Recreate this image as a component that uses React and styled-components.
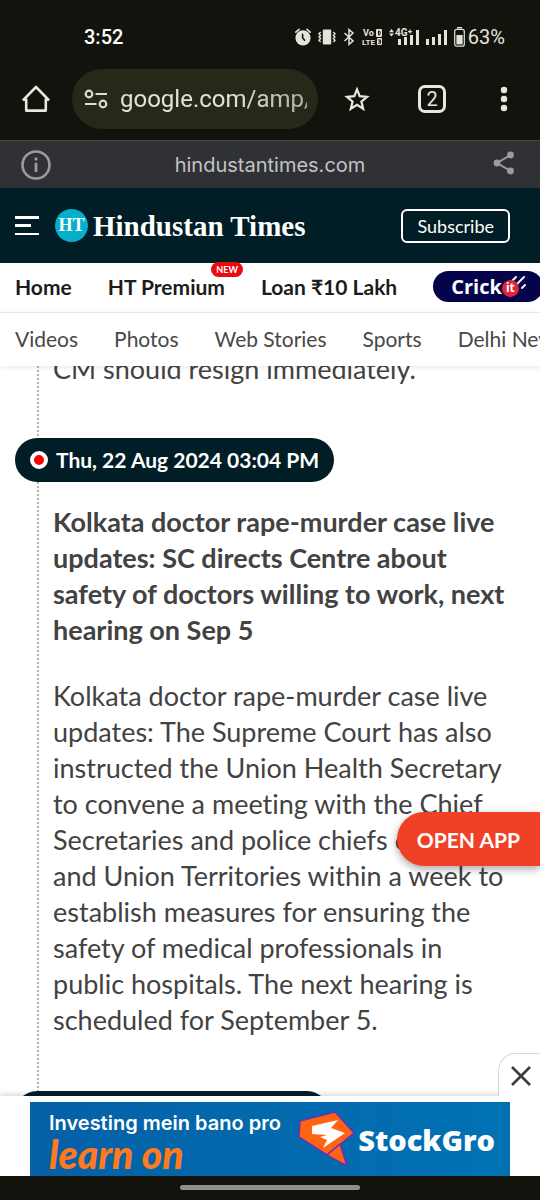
import React from 'react';
import styled, { createGlobalStyle } from 'styled-components';

const topLinks = [
  { label: 'Home' },
  { label: 'HT Premium', badge: 'NEW' },
  { label: 'Loan ₹10 Lakh' },
];

const sections = ['Videos', 'Photos', 'Web Stories', 'Sports', 'Delhi News'];

const AlarmIcon = () => (
  <svg width="18" height="18" viewBox="0 0 18 18" fill="#e4e3da">
    <path
      d="M1.8 4.2 5 1.4M16.2 4.2 13 1.4"
      stroke="#e4e3da"
      strokeWidth="1.6"
      strokeLinecap="round"
    />
    <circle cx="9" cy="9.8" r="7.6" />
    <path
      d="M8.6 6.4v3.4l2 2.4"
      fill="none"
      stroke="#12130c"
      strokeWidth="1.6"
      strokeLinecap="round"
    />
  </svg>
);

const VibrateIcon = () => (
  <svg width="18" height="18" viewBox="0 0 18 18" fill="none">
    <rect x="4.8" y="1.4" width="8.4" height="15.2" rx="1" fill="#e4e3da" />
    <path
      d="M2.6 4 1 5.700 2.600 7.400 1 9l1.600 1.600L1 12.300 2.600 14M15.400 4 17 5.700l-1.600 1.700L17 9l-1.600 1.600 1.600 1.700-1.600 1.700"
      stroke="#e4e3da"
      strokeWidth="1.4"
    />
  </svg>
);

const BluetoothIcon = () => (
  <svg width="14" height="18" viewBox="0 0 14 18" fill="none">
    <path
      d="M2.5 5 11 13 7 16.4V1.6L11 5 2.5 13"
      stroke="#e4e3da"
      strokeWidth="1.5"
    />
  </svg>
);

const VolteIcon = () => (
  <svg width="20" height="18" viewBox="0 0 20 18" fill="#e4e3da">
    <g fontFamily="Roboto, sans-serif" fontSize="9" fontWeight="700">
      <text x="1" y="8">
        Vo
      </text>
      <text x="0" y="17" fontSize="8">
        LTE
      </text>
    </g>
    <rect x="14" y="1" width="6" height="8" rx="1" />
    <rect x="15" y="10" width="5" height="7" rx="1" />
    <path
      d="M16.5 3v4h.6a1 1 0 0 0 1-1V4a1 1 0 0 0-1-1zM16 12h2.6v1.6H16.8M18.6 13.6v1.6H16"
      fill="none"
      stroke="#12130c"
    />
  </svg>
);

const NetworkIcon = () => (
  <svg width="32" height="18" viewBox="0 0 32 18" fill="#e4e3da">
    <path d="M1 4.2 3.5 1 6 4.2zM1 5.6 3.5 8.4 6 5.6z" />
    <text
      x="7"
      y="8"
      fontFamily="Roboto, sans-serif"
      fontSize="10"
      fontWeight="700"
    >
      4G
    </text>
    <path d="M20 3h1.4V1.6h1.2V3H24v1.2h-1.4v1.4h-1.2V4.2H20z" />
    <path d="M10 11h3v6h-3zM16 9h3v8h-3zM22 7h3v10h-3zM28 2h3v15h-3z" />
  </svg>
);

const SignalIcon = () => (
  <svg width="22" height="18" viewBox="0 0 22 18" fill="#e4e3da">
    <path d="M0 11h3v6H0zM6 9h3v8H6zM12 6h3v11h-3zM18 2h3v15h-3z" />
  </svg>
);

const BatteryIcon = () => (
  <svg width="11" height="20" viewBox="0 0 11 20" fill="#e4e3da">
    <path d="M3 0h5v1.4H3z" />
    <rect
      x=".7"
      y="2.4"
      width="9.6"
      height="16.8"
      rx="2"
      fill="none"
      stroke="#e4e3da"
      strokeWidth="1.2"
    />
    <path d="M2.4 8h6.2v9.4H2.4z" />
  </svg>
);

const HomeIcon = () => (
  <svg width="28" height="28" viewBox="0 0 28 28" fill="none">
    <path
      d="M1.6 14.6h2.6v11h19.6v-11h2.6L14 2z"
      stroke="#e9e8dc"
      strokeWidth="2.6"
      strokeLinejoin="round"
    />
  </svg>
);

const TuneIcon = () => (
  <svg width="24" height="20" viewBox="0 0 24 20" fill="none">
    <g stroke="#dedccb" strokeWidth="2.2">
      <circle cx="5" cy="5" r="3.3" />
      <circle cx="19" cy="15" r="3.3" />
      <path d="M11.5 5H23M1 15h11.5" />
    </g>
  </svg>
);

const StarIcon = () => (
  <svg width="26" height="26" viewBox="0 0 26 26" fill="none">
    <path
      d="m13 3.400 2.700 6.800 7.300.6-5.600 4.800 1.800 7.200-6.200-3.900-6.200 3.900 1.800-7.200L3 10.800l7.300-.6z"
      stroke="#e9e8dc"
      strokeWidth="2.2"
    />
  </svg>
);

const MoreIcon = () => (
  <svg width="20" height="26" viewBox="0 0 20 26" fill="#e9e8dc">
    <circle cx="10" cy="4" r="3.2" />
    <circle cx="10" cy="13" r="3.2" />
    <circle cx="10" cy="22" r="3.2" />
  </svg>
);

const InfoIcon = () => (
  <svg width="30" height="30" viewBox="0 0 30 30" fill="none">
    <circle cx="15" cy="15" r="13.5" stroke="#9c9c9c" strokeWidth="2.6" />
    <path d="M15 12.8V22M15 7.5v3" stroke="#9c9c9c" strokeWidth="2.8" />
  </svg>
);

const ShareIcon = () => (
  <svg width="30" height="28" viewBox="0 0 30 28" fill="#9c9c9c">
    <path
      d="M21.5 4 8 12l13.500 8"
      fill="none"
      stroke="#9c9c9c"
      strokeWidth="2"
    />
    <circle cx="21.5" cy="4" r="3.4" />
    <circle cx="8" cy="12" r="3.4" />
    <circle cx="21.5" cy="20" r="3.4" />
  </svg>
);

const MenuIcon = () => (
  <svg width="24" height="20" viewBox="0 0 24 20" fill="#fff">
    <path d="M0 0h24v3H0zM0 8h16v3H0zM0 17h24v2H0z" />
  </svg>
);

const BallTrail = () => (
  <svg width="16" height="13" viewBox="0 0 16 13" fill="none">
    <path
      d="M1 6l5-5M7 8l7-7M12 12l3-3"
      stroke="#fff"
      strokeWidth="1.8"
      strokeLinecap="round"
    />
  </svg>
);

const StockGroMark = () => (
  <svg width="58" height="58" viewBox="0 0 58 58">
    <g fill="#ff6413" stroke="#6a2fb5" strokeWidth="1.5">
      <path d="M3 11 38 2l19 21-27 22L2 27z" />
      <path d="m30 45 13-11 7 22z" />
    </g>
    <path
      d="M15 16 41 10l-7 8 14 5-22 15 4-8-7-3 7-2-15-1z"
      fill="#fff"
    />
  </svg>
);

const CloseIcon = () => (
  <svg width="20" height="20" viewBox="0 0 20 20" fill="none">
    <path d="m1 1 18 18M19 1 1 19" stroke="#3c3c3c" strokeWidth="2.6" />
  </svg>
);

const App = () => {
  return (
    <Screen>
      <GlobalStyle />
      <StatusBar>
        <Clock>3:52</Clock>
        <StatusIcons>
          <AlarmIcon />
          <VibrateIcon />
          <BluetoothIcon />
          <VolteIcon />
          <NetworkIcon />
          <SignalIcon />
          <Battery>
            <BatteryIcon />
            63%
          </Battery>
        </StatusIcons>
      </StatusBar>

      <Toolbar>
        <IconButton aria-label="Home page">
          <HomeIcon />
        </IconButton>
        <AddressBar>
          <TuneIcon />
          <AddressInput
            type="text"
            aria-label="Address"
            defaultValue="google.com/amp/"
          />
        </AddressBar>
        <ToolbarActions>
          <IconButton aria-label="Bookmark">
            <StarIcon />
          </IconButton>
          <TabsButton>2</TabsButton>
          <IconButton aria-label="More">
            <MoreIcon />
          </IconButton>
        </ToolbarActions>
      </Toolbar>

      <AmpBar>
        <IconButton aria-label="Page info">
          <InfoIcon />
        </IconButton>
        <a href="#source">hindustantimes.com</a>
        <IconButton aria-label="Share">
          <ShareIcon />
        </IconButton>
      </AmpBar>

      <Header>
        <IconButton aria-label="Menu">
          <MenuIcon />
        </IconButton>
        <Brand href="#home">
          <BrandMark>HT</BrandMark>
          <BrandName>Hindustan Times</BrandName>
        </Brand>
        <SubscribeButton>Subscribe</SubscribeButton>
      </Header>

      <TopNav>
        {topLinks.map(({ label, badge }) => (
          <TopLink key={label} href="#top">
            {label}
            {badge && <NewBadge>{badge}</NewBadge>}
          </TopLink>
        ))}
        <CrickitLink href="#crickit">
          Crick
          <Trail>
            <BallTrail />
          </Trail>
          <Ball>it</Ball>
        </CrickitLink>
      </TopNav>

      <SectionNav>
        {sections.map(name => (
          <a key={name} href="#section">
            {name}
          </a>
        ))}
      </SectionNav>

      <Main>
        <Timeline>
          <LastLine>CM should resign immediately.</LastLine>
          <Timestamp>
            <LiveDot />
            Thu, 22 Aug 2024 03:04 PM
          </Timestamp>
          <Headline>
            Kolkata doctor rape-murder case live updates: SC directs Centre
            about safety of doctors willing to work, next hearing on Sep 5
          </Headline>
          <Paragraph>
            Kolkata doctor rape-murder case live updates: The Supreme Court has
            also instructed the Union Health Secretary to convene a meeting
            with the Chief Secretaries and police chiefs of states and Union
            Territories within a week to establish measures for ensuring the
            safety of medical professionals in public hospitals. The next
            hearing is scheduled for September 5.
          </Paragraph>
          <NextTimestamp />
        </Timeline>
      </Main>

      <OpenAppButton>OPEN APP</OpenAppButton>

      <AdSlot>
        <CloseButton aria-label="Close ad">
          <CloseIcon />
        </CloseButton>
        <Banner href="#ad">
          <AdCopy>
            <AdLead>Investing mein bano pro</AdLead>
            <AdAccent>learn on</AdAccent>
          </AdCopy>
          <AdBrand>
            <StockGroMark />
            StockGro
          </AdBrand>
        </Banner>
      </AdSlot>

      <GestureBar>
        <GestureHandle />
      </GestureBar>
    </Screen>
  );
};

const GlobalStyle = createGlobalStyle`
  * {
    box-sizing: border-box;
  }

  body {
    margin: 0;
    background: #fff;
    font-family: Lato, 'Liberation Sans', sans-serif;
    font-variant-ligatures: none;
    color: #424242;
  }

  button {
    padding: 0;
    border: 0;
    background: none;
    font-family: inherit;
    color: inherit;
    cursor: pointer;
  }

  a {
    color: inherit;
    text-decoration: none;
  }

  svg {
    display: block;
    flex: none;
  }
`;

const Screen = styled.div`
  position: relative;
  display: flex;
  flex-direction: column;
  height: 100vh;
  overflow: hidden;
`;

const StatusBar = styled.div`
  display: flex;
  flex: none;
  align-items: center;
  justify-content: space-between;
  padding: 22px 35px 6px 84px;
  background: #12130c;
  color: #e4e3da;
  font-family: Roboto, sans-serif;
  font-size: 20px;
  line-height: 30px;
`;

const Clock = styled.span`
  color: #fff;
  font-weight: 500;
`;

const StatusIcons = styled.div`
  display: flex;
  align-items: center;
  gap: 6px;
`;

const Battery = styled.span`
  display: flex;
  align-items: center;
  gap: 3px;
`;

const Toolbar = styled.div`
  display: flex;
  flex: none;
  align-items: center;
  padding: 11px 26px 11px 22px;
  background: #12130c;
  border-bottom: 1px solid #45473a;
`;

const IconButton = styled.button`
  display: flex;
  flex: none;
`;

const AddressBar = styled.label`
  display: flex;
  flex: 1;
  align-items: center;
  gap: 12px;
  min-width: 0;
  height: 60px;
  margin-left: 22px;
  padding: 0 11px 0 12px;
  border-radius: 30px;
  background: #26281a;
`;

const AddressInput = styled.input`
  flex: 1;
  min-width: 0;
  padding: 0;
  border: 0;
  outline: 0;
  background: none;
  color: #e4e2d2;
  font-family: Roboto, sans-serif;
  font-size: 24px;
  line-height: 32px;
  mask-image: linear-gradient(to right, #000 60%, rgba(0, 0, 0, 0.7));
`;

const ToolbarActions = styled.div`
  display: flex;
  align-items: center;
  gap: 48px;
  margin-left: 26px;
`;

const TabsButton = styled.button`
  width: 28px;
  height: 28px;
  border: 3px solid #e9e8dc;
  border-radius: 7px;
  color: #e9e8dc;
  font-family: Roboto, sans-serif;
  font-size: 20px;
  line-height: 22px;
`;

const AmpBar = styled.div`
  display: flex;
  flex: none;
  align-items: center;
  justify-content: space-between;
  height: 47px;
  padding: 0 21px;
  background: #303135;
  color: #c3c3c5;
  font-family: Inter, sans-serif;
  font-size: 20px;
`;

const Header = styled.header`
  display: flex;
  flex: none;
  align-items: center;
  height: 75px;
  padding: 0 30px 0 15px;
  background: #011e27;
  color: #fff;
`;

const Brand = styled.a`
  display: flex;
  align-items: center;
  gap: 5px;
  margin: 0 auto 0 16px;
  font-family: 'Liberation Serif', serif;
  font-weight: 700;
  white-space: nowrap;
`;

const BrandMark = styled.span`
  width: 33px;
  height: 33px;
  border-radius: 50%;
  background: #05afc9;
  font-size: 18px;
  line-height: 33px;
  text-align: center;
`;

const BrandName = styled.span`
  font-size: 29px;
  line-height: 36px;
`;

const SubscribeButton = styled.button`
  height: 34px;
  padding: 0 14px;
  border: 2px solid #fff;
  border-radius: 6px;
  font-size: 18px;
`;

const TopNav = styled.nav`
  display: flex;
  flex: none;
  align-items: center;
  gap: 36px;
  height: 50px;
  padding: 0 0 2px 15px;
  border-bottom: 1px solid #ececec;
  color: #1c1c1c;
  font-size: 21px;
  font-weight: 700;
  white-space: nowrap;
`;

const TopLink = styled.a`
  position: relative;
`;

const NewBadge = styled.span`
  position: absolute;
  top: -12px;
  right: -18px;
  padding: 0 5px;
  border-radius: 8px;
  background: #e80c10;
  color: #fff;
  font-size: 9px;
  line-height: 15px;
`;

const CrickitLink = styled.a`
  position: relative;
  display: flex;
  flex: none;
  align-items: center;
  height: 31px;
  padding: 0 24px 0 18px;
  border-radius: 16px;
  background: #05044b;
  color: #fff;
  font-family: 'Open Sans', sans-serif;
  font-size: 20px;
`;

const Ball = styled.span`
  position: relative;
  width: 17px;
  height: 17px;
  margin-top: 4px;
  border-radius: 50%;
  background: #e0243a;
  font-size: 12px;
  line-height: 16px;
  text-align: center;
`;

const Trail = styled.span`
  position: absolute;
  top: 5px;
  right: 17px;
`;

const SectionNav = styled.nav`
  position: relative;
  z-index: 1;
  display: flex;
  flex: none;
  align-items: center;
  gap: 36px;
  height: 53px;
  padding: 0 0 2px 15px;
  background: #fff;
  box-shadow: 0 1px 6px rgba(0, 0, 0, 0.1);
  color: #484848;
  font-size: 21px;
  white-space: nowrap;
`;

const Main = styled.main`
  flex: 1;
  min-height: 0;
  overflow: hidden;
`;

const Timeline = styled.section`
  margin: -15px 30px 0 37px;
  padding-left: 14px;
  border-left: 2px dotted #b4b4b4;
  font-size: 27px;
  line-height: 36px;
`;

const LastLine = styled.p`
  margin: 0 0 51px;
`;

const Headline = styled.h2`
  margin: 22px 0 0;
  font-size: 27px;
  font-weight: 700;
  line-height: 36px;
`;

const Paragraph = styled.p`
  margin: 30px 0 53px;
`;

const Timestamp = styled.div`
  display: flex;
  align-items: center;
  gap: 8px;
  width: fit-content;
  margin-left: -38px;
  padding: 0 15px;
  border-radius: 22px;
  background: #011e27;
  color: #fff;
  font-size: 21px;
  font-weight: 700;
  line-height: 44px;
  white-space: nowrap;
`;

const NextTimestamp = styled(Timestamp)`
  width: 314px;
  height: 44px;
`;

const LiveDot = styled.span`
  width: 18px;
  height: 18px;
  border: 4px solid #fff;
  border-radius: 50%;
  background: #f00;
`;

const OpenAppButton = styled.button`
  position: absolute;
  right: 0;
  bottom: 334px;
  height: 54px;
  padding: 0 20px;
  border-radius: 27px 0 0 27px;
  background: #f04127;
  box-shadow: 0 3px 8px rgba(0, 0, 0, 0.35);
  color: #fff;
  font-size: 21px;
  font-weight: 700;
`;

const AdSlot = styled.aside`
  position: relative;
  flex: none;
  padding: 6px 30px 0;
  background: #fff;
  box-shadow: 0 -1px 6px rgba(0, 0, 0, 0.2);
`;

const CloseButton = styled.button`
  position: absolute;
  right: 0;
  bottom: 100%;
  display: flex;
  justify-content: center;
  width: 42px;
  height: 43px;
  padding: 12px 0 0 2px;
  border: 1px solid #d8d8d8;
  border-width: 1px 0 0 1px;
  border-radius: 18px 0 0 0;
  background: #fff;
`;

const Banner = styled.a`
  display: flex;
  align-items: center;
  justify-content: space-between;
  height: 74px;
  padding: 0 15px 0 19px;
  background: linear-gradient(to right, #0560a6, #0072b4);
  color: #fff;
`;

const AdCopy = styled.span`
  display: flex;
  flex-direction: column;
  padding-top: 4px;
`;

const AdLead = styled.span`
  font-family: Inter, sans-serif;
  font-size: 20px;
  font-weight: 600;
  line-height: 26px;
`;

const AdAccent = styled.span`
  color: #ff7a1e;
  font-size: 39px;
  font-style: italic;
  font-weight: 900;
  line-height: 36px;
`;

const AdBrand = styled.span`
  display: flex;
  align-items: center;
  gap: 3px;
  font-family: 'Open Sans', sans-serif;
  font-size: 29px;
  font-weight: 800;
`;

const GestureBar = styled.div`
  flex: none;
  height: 24px;
  padding-top: 9px;
  background: #12130c;
`;

const GestureHandle = styled.div`
  width: 180px;
  height: 5px;
  margin: 0 auto;
  border-radius: 3px;
  background: #8f8f88;
`;

export default App;
